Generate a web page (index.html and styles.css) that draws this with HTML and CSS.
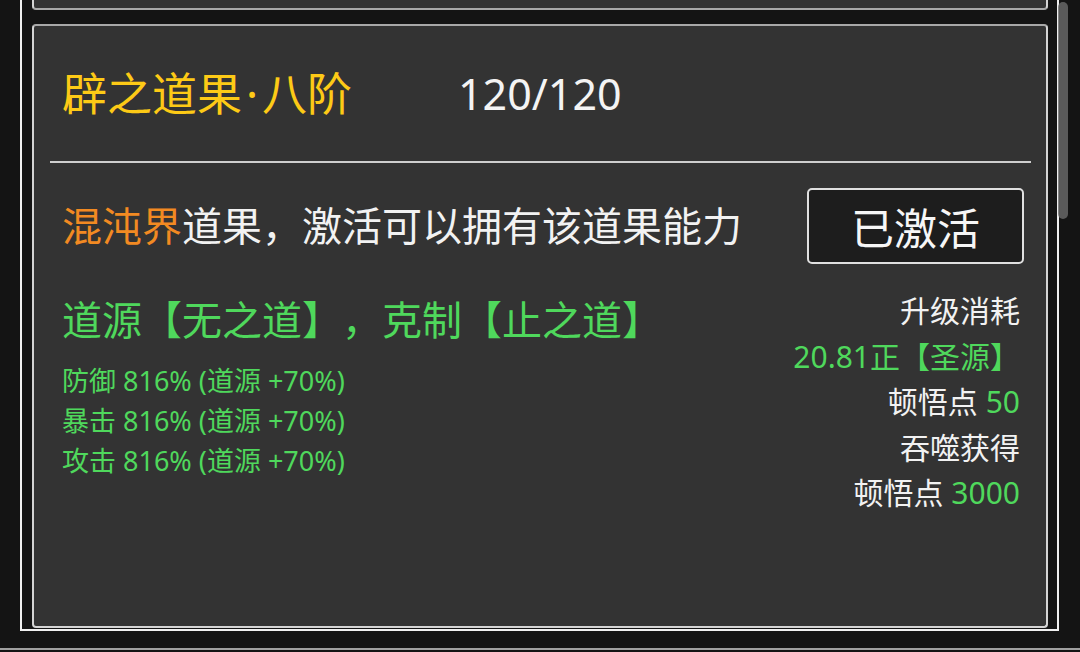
FILE: index.html
```html
<!DOCTYPE html>
<html lang="zh-CN">
<head>
<meta charset="utf-8">
<title>道果</title>
<link rel="stylesheet" href="styles.css">
</head>
<body>
<div class="screen">
  <div class="viewport">
    <div class="frame">
      <div class="card card-peek"></div>
      <div class="card">
        <div class="card-head">
          <span class="title">辟之道果<span class="dot">·</span>八阶</span>
          <span class="level">120/120</span>
        </div>
        <div class="divider"></div>
        <div class="desc-row">
          <span class="desc"><span class="orange">混沌界</span>道果，激活可以拥有该道果能力</span>
          <div class="btn">已激活</div>
        </div>
        <div class="detail">
          <div class="attrs">
            <div class="attr-title">道源【无之道】，克制【止之道】</div>
            <div class="attr-list">
              <div>防御 816% (道源 +70%)</div>
              <div>暴击 816% (道源 +70%)</div>
              <div>攻击 816% (道源 +70%)</div>
            </div>
          </div>
          <div class="costs">
            <div>升级消耗</div>
            <div class="green">20.81正【圣源】</div>
            <div>顿悟点 <span class="green">50</span></div>
            <div>吞噬获得</div>
            <div>顿悟点 <span class="green">3000</span></div>
          </div>
        </div>
      </div>
    </div>
    <div class="thumb"></div>
  </div>
  <div class="bottom-line"></div>
</div>
</body>
</html>
```

FILE: styles.css
```css
html, body {
  margin: 0;
  padding: 0;
  background: #141414;
}

body {
  width: 1080px;
  height: 652px;
  overflow: hidden;
  font-family: "Noto Sans", "Noto Sans CJK SC", sans-serif;
  color: #f2f2f2;
  text-spacing-trim: space-all;
}

.screen {
  display: flex;
  flex-direction: column;
  height: 652px;
}

.viewport {
  position: relative;
  display: flex;
  height: 631px;
  padding-left: 20px;
}

.frame {
  box-sizing: border-box;
  width: 1039px;
  height: 631px;
  border: 2px solid #f0f0f0;
  border-top: none;
  padding: 0 9px 1px 10px;
  display: flex;
  flex-direction: column;
  gap: 14px;
  overflow: hidden;
}

.card {
  box-sizing: border-box;
  background: #333333;
  border: 2px solid #d4d4d4;
  border-top-color: #a8a8a8;
  border-radius: 4px;
  flex: 1;
  display: flex;
  flex-direction: column;
}

.card-peek {
  flex: 0 0 10px;
  border-top: none;
  border-radius: 0 0 4px 4px;
  border-bottom-color: #a8a8a8;
}

.card-head {
  display: flex;
  align-items: center;
  height: 135px;
  padding-left: 28px;
  line-height: 1.2;
}

.title {
  width: 396px;
  font-size: 45px;
  color: #fdca16;
}

.dot {
  padding: 0 4px;
}

.level {
  color: #f4f4f4;
  font-size: 43px;
}

.divider {
  height: 2px;
  margin: 0 15px 0 16px;
  background: #cfcfcf;
}

.desc-row {
  display: flex;
  align-items: center;
  justify-content: space-between;
  margin-top: 25px;
  padding: 0 22px 0 28px;
}

.desc {
  font-size: 40px;
  line-height: 1.2;
}

.orange {
  color: #f28a22;
}

.green {
  color: #4fd85c;
}

.btn {
  box-sizing: border-box;
  width: 217px;
  height: 76px;
  display: flex;
  align-items: center;
  justify-content: center;
  background: #1d1d1d;
  border: 2px solid #e0e0e0;
  border-radius: 5px;
  font-size: 43px;
  color: #f6f6f6;
}

.detail {
  display: flex;
  justify-content: space-between;
  align-items: flex-start;
  margin-top: 24px;
  padding: 0 26px 0 28px;
}

.attrs {
  padding-top: 8px;
  color: #4fd85c;
}

.attr-title {
  font-size: 40px;
  line-height: 48px;
}

.attr-list {
  margin-top: 17px;
  font-size: 27px;
  line-height: 40px;
}

.costs {
  text-align: right;
  font-size: 30px;
  line-height: 45.5px;
}

.thumb {
  position: absolute;
  left: 1058px;
  top: 2px;
  width: 10px;
  height: 217px;
  border-radius: 5px;
  background: rgba(108, 108, 108, 0.8);
}

.bottom-line {
  margin-top: 17px;
  height: 2px;
  background: #a0a0a0;
}
```
